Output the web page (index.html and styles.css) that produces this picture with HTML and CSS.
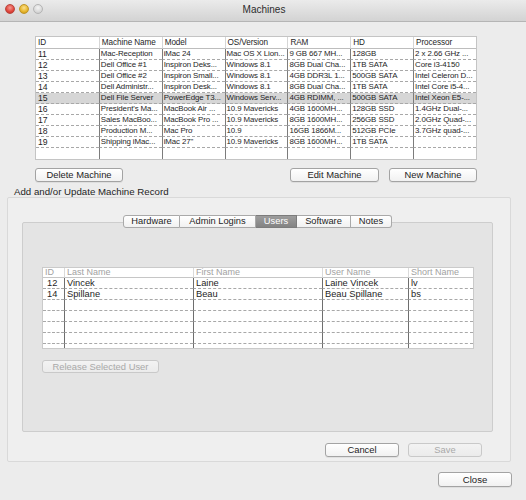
FILE: index.html
```html
<!DOCTYPE html>
<html>
<head>
<meta charset="utf-8">
<link rel="stylesheet" href="styles.css">
</head>
<body>
<div class="window">
  <div class="titlebar">
    <div class="lights">
      <span class="light red"></span>
      <span class="light yellow"></span>
      <span class="light off"></span>
    </div>
    <div class="title">Machines</div>
  </div>

  <div class="top">
    <table class="grid machines">
      <thead>
        <tr><th>ID</th><th>Machine Name</th><th>Model</th><th>OS/Version</th><th>RAM</th><th>HD</th><th>Processor</th></tr>
      </thead>
      <tbody>
        <tr><td>11</td><td>Mac-Reception</td><td>iMac 24</td><td>Mac OS X Lion...</td><td>9 GB 667 MH...</td><td>128GB</td><td>2 x 2.66 GHz ...</td></tr>
        <tr><td>12</td><td>Dell Office #1</td><td>Inspiron Deks...</td><td>Windows 8.1</td><td>8GB Dual Cha...</td><td>1TB SATA</td><td>Core i3-4150</td></tr>
        <tr><td>13</td><td>Dell Office #2</td><td>Inspiron Small...</td><td>Windows 8.1</td><td>4GB DDR3L 1...</td><td>500GB SATA</td><td>Intel Celeron D...</td></tr>
        <tr><td>14</td><td>Dell Administr...</td><td>Inspiron Desk...</td><td>Windows 8.1</td><td>8GB Dual Cha...</td><td>1TB SATA</td><td>Intel Core i5-4...</td></tr>
        <tr class="selected"><td>15</td><td>Dell File Server</td><td>PowerEdge T3...</td><td>Windows Serv...</td><td>4GB RDIMM, ...</td><td>500GB SATA</td><td>Intel Xeon E5-...</td></tr>
        <tr><td>16</td><td>President's Ma...</td><td>MacBook Air ...</td><td>10.9 Mavericks</td><td>4GB 1600MH...</td><td>128GB SSD</td><td>1.4GHz Dual-...</td></tr>
        <tr><td>17</td><td>Sales MacBoo...</td><td>MacBook Pro ...</td><td>10.9 Mavericks</td><td>8GB 1600MH...</td><td>256GB SSD</td><td>2.0GHz Quad-...</td></tr>
        <tr><td>18</td><td>Production M...</td><td>Mac Pro</td><td>10.9</td><td>16GB 1866M...</td><td>512GB PCIe</td><td>3.7GHz quad-...</td></tr>
        <tr><td>19</td><td>Shipping iMac...</td><td>iMac 27"</td><td>10.9 Mavericks</td><td>8GB 1600MH...</td><td>1TB SATA</td><td></td></tr>
        <tr class="empty"><td></td><td></td><td></td><td></td><td></td><td></td><td></td></tr>
      </tbody>
    </table>

    <div class="btnrow">
      <button class="btn btn-delete">Delete Machine</button>
      <div class="spacer"></div>
      <button class="btn btn-edit">Edit Machine</button>
      <button class="btn btn-new">New Machine</button>
    </div>
  </div>

  <div class="section-label">Add and/or Update Machine Record</div>

  <div class="group">
    <div class="tabpanel">
      <div class="tabs">
        <span class="tab first">Hardware</span>
        <span class="tab">Admin Logins</span>
        <span class="tab active">Users</span>
        <span class="tab">Software</span>
        <span class="tab last">Notes</span>
      </div>
      <div class="tabbody">
        <table class="grid users">
          <colgroup>
            <col class="u-id"><col class="u-last"><col class="u-first"><col class="u-user"><col class="u-short">
          </colgroup>
          <thead>
            <tr><th>ID</th><th>Last Name</th><th>First Name</th><th>User Name</th><th>Short Name</th></tr>
          </thead>
          <tbody>
            <tr><td class="num">12</td><td>Vincek</td><td>Laine</td><td>Laine Vincek</td><td>lv</td></tr>
            <tr><td class="num">14</td><td>Spillane</td><td>Beau</td><td>Beau Spillane</td><td>bs</td></tr>
            <tr class="empty"><td></td><td></td><td></td><td></td><td></td></tr>
            <tr class="empty"><td></td><td></td><td></td><td></td><td></td></tr>
            <tr class="empty"><td></td><td></td><td></td><td></td><td></td></tr>
            <tr class="empty"><td></td><td></td><td></td><td></td><td></td></tr>
            <tr class="filler"><td></td><td></td><td></td><td></td><td></td></tr>
          </tbody>
        </table>
        <button class="btn disabled btn-release">Release Selected User</button>
      </div>
    </div>
    <div class="group-actions">
      <button class="btn btn-cancel">Cancel</button>
      <button class="btn disabled btn-save">Save</button>
    </div>
  </div>

  <div class="footer">
    <button class="btn btn-close">Close</button>
  </div>
</div>
</body>
</html>
```

FILE: styles.css
```css
* { box-sizing: border-box; }

html, body {
  margin: 0;
  padding: 0;
}

body {
  width: 526px;
  height: 500px;
  overflow: hidden;
  background: #ececec;
  font-family: "Liberation Sans", Arial, sans-serif;
  color: #1e1e1e;
}

.window {
  width: 526px;
  height: 500px;
  background: #ececec;
}

/* Title bar */
.titlebar {
  height: 22px;
  display: flex;
  align-items: center;
  justify-content: center;
  position: relative;
  background: linear-gradient(#ebebeb, #d3d3d3);
  border-bottom: 1px solid #b5b5b5;
}

.lights {
  position: absolute;
  left: 5px;
  top: 4px;
  display: flex;
  gap: 4px;
}

.light {
  width: 10px;
  height: 10px;
  border-radius: 50%;
  display: block;
}

.light.red {
  background: radial-gradient(circle at 50% 35%, #f59a93, #e0443a 60%, #b5302a);
  border: 1px solid #b8463e;
}

.light.yellow {
  background: radial-gradient(circle at 50% 35%, #fbe08e, #e6b52a 60%, #b98a1c);
  border: 1px solid #bf9528;
}

.light.off {
  background: radial-gradient(circle at 50% 35%, #f4f4f4, #d9d9d9 60%, #c4c4c4);
  border: 1px solid #b4b4b4;
}

.title {
  font-size: 10px;
  color: #2c2c2c;
  padding-left: 2px;
  margin-top: -3px;
}

/* Top section */
.top {
  padding: 14px 49px 0 35px;
}

.grid {
  border-collapse: separate;
  border-spacing: 0;
  table-layout: fixed;
  background: #fff;
}

.grid th,
.grid td {
  padding: 0 0 0 2px;
  white-space: nowrap;
  overflow: hidden;
  text-align: left;
  font-weight: normal;
}

.machines {
  width: 442px;
  border: 1px solid #c4c4c4;
  font-size: 7.9px;
  letter-spacing: -0.1px;
}

.machines th {
  line-height: 11px;
  height: 12px;
  border-bottom: 1px solid #bdbdbd;
  border-left: 1px solid #d6d6d6;
  color: #1e1e1e;
  font-size: 8.2px;
}

.machines td {
  line-height: 10px;
  height: 11px;
  padding-left: 1px;
  border-bottom: 1px dashed #a8a8a8;
  border-left: 1px solid #7c7c7c;
}

.machines td:first-child {
  padding-left: 2px;
  font-size: 8.6px;
}

.grid th:first-child,
.grid td:first-child {
  border-left: none;
}

.machines tr.selected td {
  background: #d6d6d6;
}

.machines tr.empty td {
  border-bottom: none;
}

/* Buttons */
.btn {
  font-family: "Liberation Sans", Arial, sans-serif;
  font-size: 9.4px;
  color: #1e1e1e;
  height: 14px;
  padding: 0;
  line-height: 12px;
  border: 1px solid #a3a3a3;
  border-radius: 3px;
  background: linear-gradient(#ffffff, #f1f1f1);
  text-align: center;
  box-shadow: 0 1px 0 rgba(0,0,0,0.06);
}

.btn.disabled {
  color: #a9a9a9;
  border-color: #c9c9c9;
  background: linear-gradient(#f3f3f3, #ebebeb);
  box-shadow: none;
}

.btnrow {
  display: flex;
  margin-top: 8px;
}

.spacer { flex: 1; }

.btn-delete { width: 88px; }
.btn-edit { width: 89px; }
.btn-new { width: 88px; margin-left: 10px; }

/* Section label */
.section-label {
  margin: 4px 0 0 14px;
  height: 11px;
  font-size: 9.7px;
  line-height: 11px;
  color: #1e1e1e;
}

/* Group box */
.group {
  margin-left: 7px;
  width: 504px;
  height: 265px;
  border: 1px solid #d9d9d9;
  border-radius: 2px;
  background: #efefef;
  padding: 17px 17px 0 14px;
}

.tabpanel {
  display: flex;
  flex-direction: column;
}

.tabs {
  display: flex;
  justify-content: center;
  position: relative;
  z-index: 1;
  height: 13px;
}

.tab {
  display: block;
  height: 13px;
  font-size: 9.3px;
  line-height: 11px;
  text-align: center;
  border: 1px solid #a9a9a9;
  border-left: none;
  background: linear-gradient(#ffffff, #f1f1f1);
  color: #1e1e1e;
  padding: 0 4px;
}

.tab.first {
  border-left: 1px solid #a9a9a9;
  border-radius: 3px 0 0 3px;
  width: 57px;
}

.tab:nth-child(2) { width: 76px; }
.tab:nth-child(3) { width: 41px; }
.tab:nth-child(4) { width: 54px; }

.tab.last {
  border-radius: 0 3px 3px 0;
  width: 41px;
}

.tab.active {
  background: linear-gradient(#9d9d9d, #838383);
  color: #ffffff;
  border-color: #7c7c7c;
}

.tabbody {
  margin-top: -6px;
  height: 210px;
  border: 1px solid #cdcdcd;
  border-radius: 2px;
  background: #e4e4e4;
  padding: 44px 20px 0 19px;
}

/* Users table */
.users {
  width: 430px;
  border: 1px solid #cacaca;
  font-size: 9.3px;
}

.u-id { width: 21px; }
.u-last { width: 129px; }
.u-first { width: 129px; }
.u-user { width: 86px; }
.u-short { width: 65px; }

.users th {
  line-height: 9px;
  height: 10px;
  border-bottom: 1px solid #c6c6c6;
  border-left: 1px solid #dadada;
  color: #a2a2a2;
  font-size: 9px;
}

.users td {
  line-height: 10px;
  height: 11px;
  border-bottom: 1px dashed #a8a8a8;
  border-left: 1px solid #6e6e6e;
}

.users td.num {
  padding-left: 4px;
}

.users tr.filler td {
  height: 4px;
  line-height: 4px;
  border-bottom: none;
}

.btn-release {
  display: block;
  margin-top: 11px;
  width: 117px;
  height: 13px;
  line-height: 11px;
}

.group-actions {
  display: flex;
  justify-content: flex-end;
  gap: 9px;
  margin-top: 11px;
  padding-right: 11px;
}

.btn-cancel,
.btn-save {
  width: 74px;
  height: 14px;
}

.footer {
  display: flex;
  justify-content: flex-end;
  padding: 10px 14px 0 0;
}

.btn-close {
  width: 74px;
  height: 15px;
  line-height: 13px;
  font-size: 9.6px;
}
```
